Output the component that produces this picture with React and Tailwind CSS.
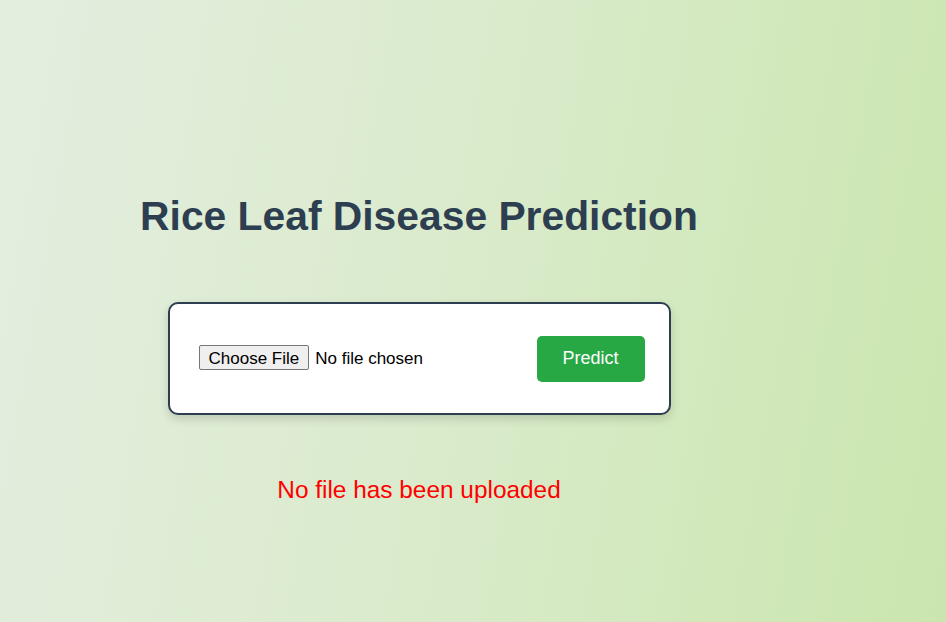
export default function App() {
  return (
    <div
      className="min-h-[622px] w-full bg-[linear-gradient(100deg,#e3eee0_0%,#dbebcd_45%,#cae6ae_100%)]"
      style={{ fontFamily: '"Liberation Sans", Arial, sans-serif' }}
    >
      <div className="w-[838px] flex flex-col items-center pt-[193px]">
        <h1 className="text-[40.8px] font-bold text-[#2c3e50] leading-[46px]">
          Rice Leaf Disease Prediction
        </h1>
        <div className="mt-[63px] w-[503px] h-[113px] bg-white border-2 border-[#2c3e50] rounded-[10px] shadow-[0_4px_10px_rgba(0,0,0,0.15)] flex items-center justify-between pl-[29px] pr-[24px]">
          <input
            type="file"
            className="text-[17px] text-black file:text-[17px] file:h-[25px] file:px-[9px] file:mr-[6px] file:border file:border-solid file:border-[#767676] file:bg-[#efefef] file:rounded-[2px] file:text-black"
          />
          <button className="w-[108px] h-[46px] bg-[#28a745] text-white text-[18px] rounded-[5px]">
            Predict
          </button>
        </div>
        <p className="mt-[61px] text-[24.4px] leading-[28px] text-[#ff0000]">
          No file has been uploaded
        </p>
      </div>
    </div>
  );
}
